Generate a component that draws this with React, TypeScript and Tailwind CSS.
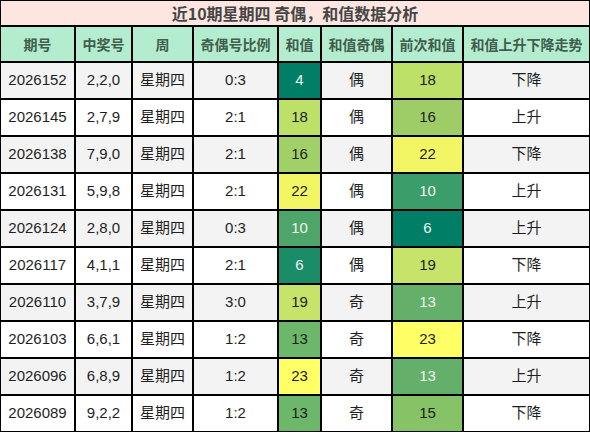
const rows = [
  { id: "2026152", nums: "2,2,0", ratio: "0:3", sum: 4, sumBg: "bg-[#007f66]", parity: "偶", prev: 18, prevBg: "bg-[#bde068]", trend: "下降" },
  { id: "2026145", nums: "2,7,9", ratio: "2:1", sum: 18, sumBg: "bg-[#bde068]", parity: "偶", prev: 16, prevBg: "bg-[#9ecd68]", trend: "上升" },
  { id: "2026138", nums: "7,9,0", ratio: "2:1", sum: 16, sumBg: "bg-[#a2d068]", parity: "偶", prev: 22, prevBg: "bg-[#f2f665]", trend: "下降" },
  { id: "2026131", nums: "5,9,8", ratio: "2:1", sum: 22, sumBg: "bg-[#f2f665]", parity: "偶", prev: 10, prevBg: "bg-[#3b9d6a]", trend: "上升" },
  { id: "2026124", nums: "2,8,0", ratio: "0:3", sum: 10, sumBg: "bg-[#4ea56a]", parity: "偶", prev: 6, prevBg: "bg-[#007f66]", trend: "上升" },
  { id: "2026117", nums: "4,1,1", ratio: "2:1", sum: 6, sumBg: "bg-[#1b8c68]", parity: "偶", prev: 19, prevBg: "bg-[#c6e36a]", trend: "下降" },
  { id: "2026110", nums: "3,7,9", ratio: "3:0", sum: 19, sumBg: "bg-[#c6e36a]", parity: "奇", prev: 13, prevBg: "bg-[#64b06a]", trend: "上升" },
  { id: "2026103", nums: "6,6,1", ratio: "1:2", sum: 13, sumBg: "bg-[#6cb76a]", parity: "奇", prev: 23, prevBg: "bg-[#ffff66]", trend: "下降" },
  { id: "2026096", nums: "6,8,9", ratio: "1:2", sum: 23, sumBg: "bg-[#ffff66]", parity: "奇", prev: 13, prevBg: "bg-[#64b06a]", trend: "上升" },
  { id: "2026089", nums: "9,2,2", ratio: "1:2", sum: 13, sumBg: "bg-[#6cb76a]", parity: "奇", prev: 15, prevBg: "bg-[#86c266]", trend: "下降" },
];

const headers = ["期号", "中奖号", "周", "奇偶号比例", "和值", "和值奇偶", "前次和值", "和值上升下降走势"];

export default function App() {
  return (
    <div className="w-[590px] h-[432px] bg-white">
      <div
        className="grid grid-cols-[73px_55px_59px_83px_41px_69px_69px_125px] gap-[2px] bg-black p-[1px] w-[590px] text-[15px] text-[#1f1f1f]"
        style={{ fontFamily: '"Liberation Sans", "Noto Sans CJK SC", sans-serif' }}
      >
        <div
          className="col-span-8 h-[24px] bg-[#fde5e0] flex items-center justify-center text-[16px] font-bold text-[#454545]"
          style={{ fontFamily: '"Noto Sans CJK SC", sans-serif' }}
        >
          近10期星期四 奇偶，和值数据分析
        </div>
        {headers.map((h) => (
          <div
            key={h}
            className="h-[34px] bg-[#b4ecd0] flex items-center justify-center text-[14px] font-bold text-[#3f5e4c]"
            style={{ fontFamily: '"Noto Sans CJK SC", sans-serif' }}
          >
            {h}
          </div>
        ))}
        {rows.map((r, i) => {
          const bg = i % 2 === 0 ? "bg-[#f3f3f3]" : "bg-white";
          const sumLight = r.sum <= 10;
          const prevLight = r.prev <= 13;
          return [
            <div key={r.id + "a"} className={`h-[35px] ${bg} flex items-center justify-center`}>{r.id}</div>,
            <div key={r.id + "b"} className={`h-[35px] ${bg} flex items-center justify-center`}>{r.nums}</div>,
            <div key={r.id + "c"} className={`h-[35px] ${bg} flex items-center justify-center`}>星期四</div>,
            <div key={r.id + "d"} className={`h-[35px] ${bg} flex items-center justify-center`}>{r.ratio}</div>,
            <div key={r.id + "e"} className={`h-[35px] ${r.sumBg} flex items-center justify-center ${sumLight ? "text-[#eef6f0]" : "text-[#1f1f1f]"}`}>{r.sum}</div>,
            <div key={r.id + "f"} className={`h-[35px] ${bg} flex items-center justify-center`}>{r.parity}</div>,
            <div key={r.id + "g"} className={`h-[35px] ${r.prevBg} flex items-center justify-center ${prevLight ? "text-[#eef6f0]" : "text-[#1f1f1f]"}`}>{r.prev}</div>,
            <div key={r.id + "h"} className={`h-[35px] ${bg} flex items-center justify-center`}>{r.trend}</div>,
          ];
        })}
      </div>
    </div>
  );
}
